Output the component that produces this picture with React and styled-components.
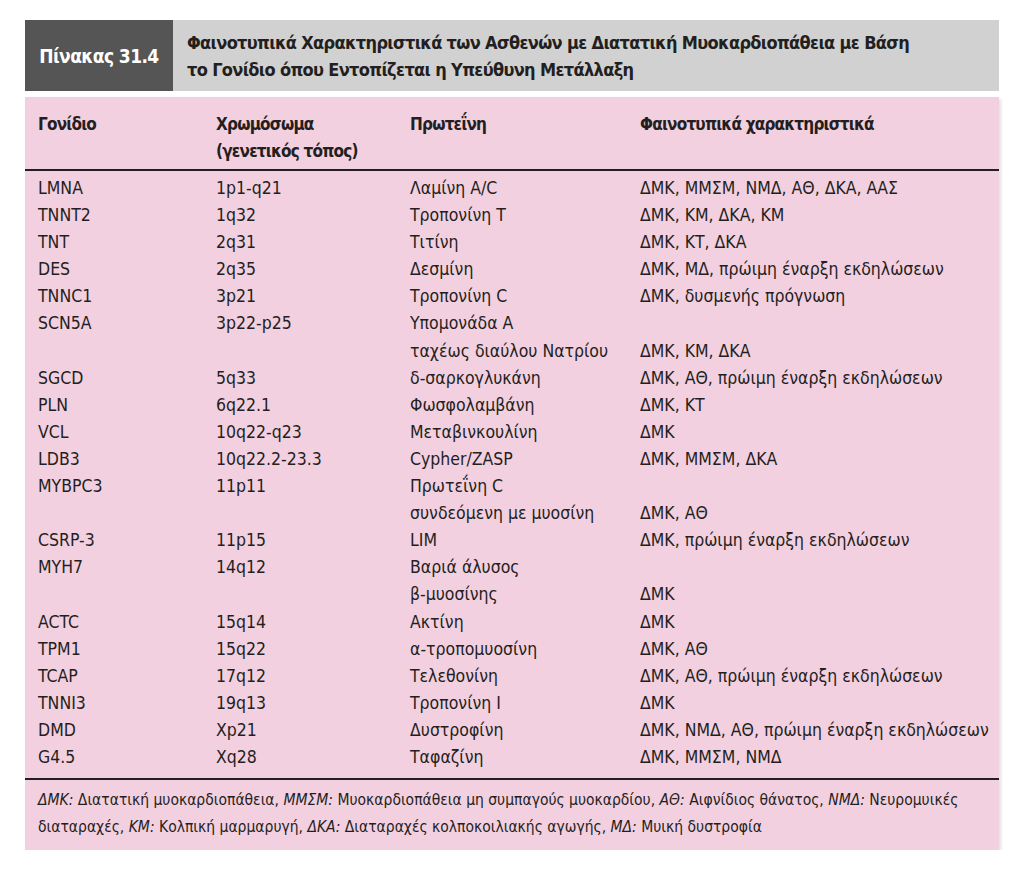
import React from 'react';
import styled, { createGlobalStyle } from 'styled-components';

const GlobalStyle = createGlobalStyle`
    body {
        margin: 0;
        background: #ffffff;
        font-family: "DejaVu Sans Condensed", "Liberation Sans", sans-serif;
        color: #231f20;
    }
`;

const Page = styled.div`
    width: 974px;
    padding: 20px 0 0 25px;
`;

const Banner = styled.div`
    display: flex;
    height: 71px;
    background-color: #d1d1d1;
`;

const Label = styled.div`
    width: 148px;
    flex-shrink: 0;
    display: flex;
    align-items: center;
    justify-content: center;
    background-color: #555555;
    color: #ffffff;
    font-weight: 700;
    font-size: 19px;
    letter-spacing: -0.6px;
`;

const Title = styled.div`
    padding: 9px 0 0 14px;
    font-weight: 700;
    font-size: 18px;
    letter-spacing: -0.65px;
    line-height: 27px;
`;

const Panel = styled.div`
    margin-top: 6px;
    background-color: #f3d0e0;
    box-shadow: 2px 2px 3px rgba(0, 0, 0, 0.12);
    padding-bottom: 9px;
`;

const Row = styled.div`
    display: grid;
    grid-template-columns: 178px 194px 230px 1fr;
    padding-left: 13px;
    font-size: ${(p) => (p.head ? '17px' : '17.5px')};
    letter-spacing: ${(p) => (p.head ? '-0.8px' : '0')};
    line-height: ${(p) => p.h || '27.1px'};
    font-weight: ${(p) => (p.head ? 700 : 400)};
    white-space: nowrap;
`;

const Head = styled.div`
    padding: 14px 0 4px;
    border-bottom: 2px solid #231f20;
`;

const Body = styled.div`
    padding: 4px 0 7px;
    border-bottom: 2px solid #231f20;
`;

const Note = styled.p`
    margin: 0;
    padding: 7px 13px 0;
    font-size: 15.5px;
    line-height: 27px;
    white-space: nowrap;
`;

const rows = [
    ['LMNA', '1p1-q21', 'Λαμίνη A/C', 'ΔΜΚ, ΜΜΣΜ, ΝΜΔ, ΑΘ, ΔΚΑ, ΑΑΣ'],
    ['TNNT2', '1q32', 'Τροπονίνη T', 'ΔΜΚ, ΚΜ, ΔΚΑ, ΚΜ'],
    ['TNT', '2q31', 'Τιτίνη', 'ΔΜΚ, ΚΤ, ΔΚΑ'],
    ['DES', '2q35', 'Δεσμίνη', 'ΔΜΚ, ΜΔ, πρώιμη έναρξη εκδηλώσεων'],
    ['TNNC1', '3p21', 'Τροπονίνη C', 'ΔΜΚ, δυσμενής πρόγνωση'],
    ['SCN5A', '3p22-p25', 'Υπομονάδα A', ''],
    ['', '', 'ταχέως διαύλου Νατρίου', 'ΔΜΚ, ΚΜ, ΔΚΑ'],
    ['SGCD', '5q33', 'δ-σαρκογλυκάνη', 'ΔΜΚ, ΑΘ, πρώιμη έναρξη εκδηλώσεων'],
    ['PLN', '6q22.1', 'Φωσφολαμβάνη', 'ΔΜΚ, ΚΤ'],
    ['VCL', '10q22-q23', 'Μεταβινκουλίνη', 'ΔΜΚ'],
    ['LDB3', '10q22.2-23.3', 'Cypher/ZASP', 'ΔΜΚ, ΜΜΣΜ, ΔΚΑ'],
    ['MYBPC3', '11p11', 'Πρωτεΐνη C', ''],
    ['', '', 'συνδεόμενη με μυοσίνη', 'ΔΜΚ, ΑΘ'],
    ['CSRP-3', '11p15', 'LIM', 'ΔΜΚ, πρώιμη έναρξη εκδηλώσεων'],
    ['MYH7', '14q12', 'Βαριά άλυσος', ''],
    ['', '', 'β-μυοσίνης', 'ΔΜΚ'],
    ['ACTC', '15q14', 'Ακτίνη', 'ΔΜΚ'],
    ['TPM1', '15q22', 'α-τροπομυοσίνη', 'ΔΜΚ, ΑΘ'],
    ['TCAP', '17q12', 'Τελεθονίνη', 'ΔΜΚ, ΑΘ, πρώιμη έναρξη εκδηλώσεων'],
    ['TNNI3', '19q13', 'Τροπονίνη I', 'ΔΜΚ'],
    ['DMD', 'Xp21', 'Δυστροφίνη', 'ΔΜΚ, ΝΜΔ, ΑΘ, πρώιμη έναρξη εκδηλώσεων'],
    ['G4.5', 'Xq28', 'Ταφαζίνη', 'ΔΜΚ, ΜΜΣΜ, ΝΜΔ'],
];

const App = () => {
    return (
        <>
            <GlobalStyle />
            <Page>
                <Banner>
                    <Label>Πίνακας 31.4</Label>
                    <Title>
                        Φαινοτυπικά Χαρακτηριστικά των Ασθενών με Διατατική Μυοκαρδιοπάθεια με Βάση
                        <br />
                        το Γονίδιο όπου Εντοπίζεται η Υπεύθυνη Μετάλλαξη
                    </Title>
                </Banner>
                <Panel>
                    <Head>
                        <Row head h="27px">
                            <div>Γονίδιο</div>
                            <div>
                                Χρωμόσωμα
                                <br />
                                (γενετικός τόπος)
                            </div>
                            <div>Πρωτεΐνη</div>
                            <div>Φαινοτυπικά χαρακτηριστικά</div>
                        </Row>
                    </Head>
                    <Body>
                        {rows.map((r, i) => (
                            <Row key={i}>
                                {r.map((c, j) => (
                                    <div key={j}>{c}</div>
                                ))}
                            </Row>
                        ))}
                    </Body>
                    <Note>
                        <i>ΔΜΚ:</i> Διατατική μυοκαρδιοπάθεια, <i>ΜΜΣΜ:</i> Μυοκαρδιοπάθεια μη συμπαγούς μυοκαρδίου, <i>ΑΘ:</i> Αιφνίδιος θάνατος, <i>ΝΜΔ:</i> Νευρομυικές
                        <br />
                        διαταραχές, <i>ΚΜ:</i> Κολπική μαρμαρυγή, <i>ΔΚΑ:</i> Διαταραχές κολποκοιλιακής αγωγής, <i>ΜΔ:</i> Μυική δυστροφία
                    </Note>
                </Panel>
            </Page>
        </>
    );
};

export default App;
